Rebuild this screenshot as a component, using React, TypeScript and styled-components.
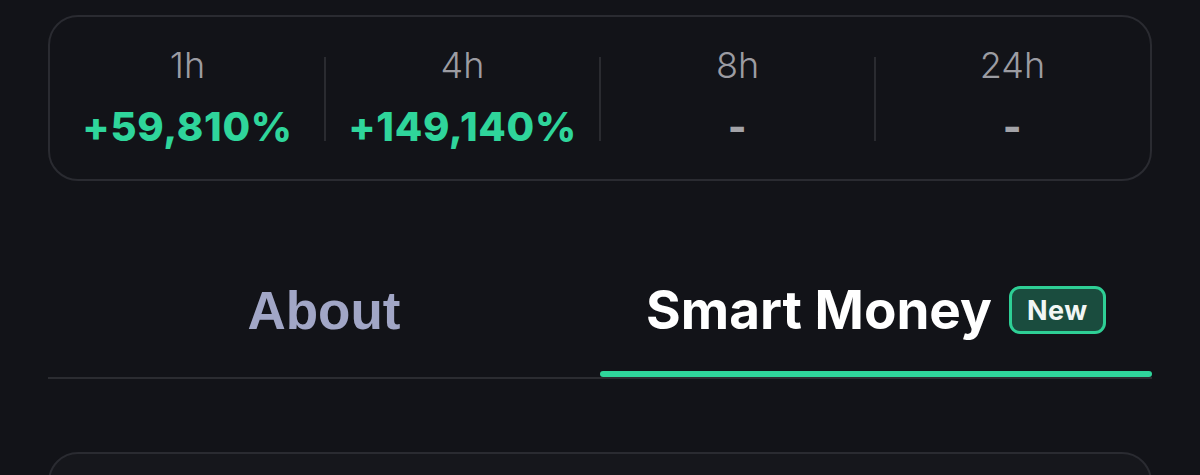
import React from "react";
import styled, { createGlobalStyle } from "styled-components";

const GlobalStyle = createGlobalStyle`
  html, body {
    margin: 0;
    padding: 0;
    background: #121318;
  }
  body {
    font-family: Inter, "Noto Sans", sans-serif;
    -webkit-font-smoothing: antialiased;
  }
`;

const Page = styled.div`
  width: 1200px;
  height: 475px;
  box-sizing: border-box;
  padding: 15px 48px 0;
  background: #121318;
  overflow: hidden;
  display: flex;
  flex-direction: column;
  & > * {
    flex-shrink: 0;
  }
`;

const StatsCard = styled.div`
  height: 166px;
  box-sizing: border-box;
  border: 2px solid #2a2b31;
  border-radius: 30px;
  display: grid;
  grid-template-columns: repeat(4, 1fr);
  align-items: center;
`;

const StatCell = styled.div<{ $divider?: boolean }>`
  position: relative;
  display: flex;
  flex-direction: column;
  align-items: center;
  height: 162px;
  box-sizing: border-box;
  padding-top: 26px;
  &::before {
    content: "";
    display: ${(p) => (p.$divider ? "block" : "none")};
    position: absolute;
    left: -1px;
    top: 40px;
    width: 2px;
    height: 84px;
    background: #2a2b30;
  }
`;

const StatLabel = styled.div`
  font-family: Inter, sans-serif;
  font-weight: 300;
  font-size: 36px;
  line-height: 44px;
  color: #9c9ca2;
`;

const StatValue = styled.div<{ $empty?: boolean }>`
  font-family: Inter, sans-serif;
  font-weight: 800;
  font-size: 40px;
  line-height: 48px;
  letter-spacing: 0.7px;
  color: ${(p) => (p.$empty ? "#a3a3a8" : "#2fd59b")};
  margin-top: 16px;
`;

const TabBar = styled.div`
  margin-top: 68px;
  display: grid;
  grid-template-columns: 1fr 1fr;
  border-bottom: 2px solid #2b2c31;
`;

const Tab = styled.div`
  height: 128px;
  display: flex;
  flex-direction: column;
`;

const TabContent = styled.div`
  flex: 1;
  display: flex;
  align-items: center;
  justify-content: center;
  gap: 17px;
`;

const TabLabel = styled.span<{ $active?: boolean }>`
  font-family: ${(p) => (p.$active ? "Inter, sans-serif" : '"Liberation Sans", Arial, sans-serif')};
  font-weight: 700;
  font-size: 53px;
  color: ${(p) => (p.$active ? "#ffffff" : "#a1a6c6")};
`;

const Badge = styled.span`
  box-sizing: border-box;
  width: 97px;
  height: 48px;
  border: 3px solid #2ecf95;
  border-radius: 11px;
  background: #1a4c3e;
  color: #f2f6f4;
  font-family: Inter, sans-serif;
  font-weight: 700;
  font-size: 27px;
  letter-spacing: 0.5px;
  display: flex;
  align-items: center;
  justify-content: center;
`;

const Indicator = styled.div<{ $active?: boolean }>`
  height: 6px;
  border-radius: 3px;
  background: ${(p) => (p.$active ? "#2fd59b" : "transparent")};
`;

const LowerCard = styled.div`
  margin-top: 73px;
  height: 120px;
  box-sizing: border-box;
  border: 2px solid #2a2b31;
  border-radius: 30px;
  background: #16171c;
`;

const stats = [
  { label: "1h", value: "+59,810%" },
  { label: "4h", value: "+149,140%" },
  { label: "8h", value: "-" },
  { label: "24h", value: "-" },
];

export default function App() {
  return (
    <>
      <GlobalStyle />
      <Page>
        <StatsCard>
          {stats.map((s, i) => (
            <StatCell key={s.label} $divider={i > 0}>
              <StatLabel>{s.label}</StatLabel>
              <StatValue $empty={s.value === "-"}>{s.value}</StatValue>
            </StatCell>
          ))}
        </StatsCard>
        <TabBar>
          <Tab>
            <TabContent>
              <TabLabel>About</TabLabel>
            </TabContent>
            <Indicator />
          </Tab>
          <Tab>
            <TabContent>
              <TabLabel $active>Smart Money</TabLabel>
              <Badge>New</Badge>
            </TabContent>
            <Indicator $active />
          </Tab>
        </TabBar>
        <LowerCard />
      </Page>
    </>
  );
}
